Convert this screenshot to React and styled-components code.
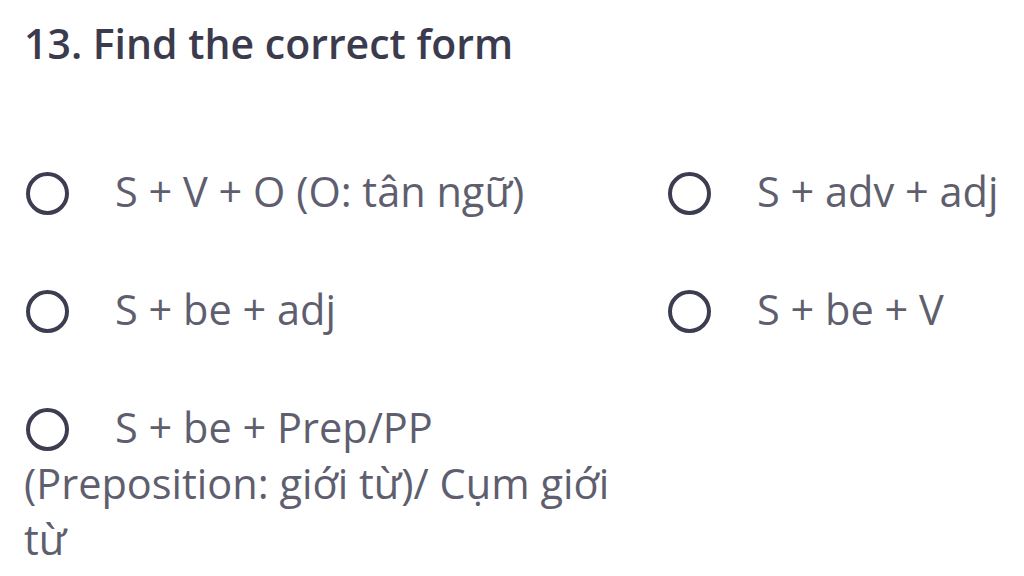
import React from 'react';
import styled, { createGlobalStyle } from 'styled-components';

const GlobalStyle = createGlobalStyle`
  html, body {
    margin: 0;
    padding: 0;
    background: #ffffff;
  }
  body {
    font-family: 'Open Sans', 'Noto Sans', sans-serif;
  }
`;

const Page = styled.div`
  width: 1024px;
  height: 576px;
  overflow: hidden;
  padding: 13px 0 0 24px;
  box-sizing: border-box;
`;

const Title = styled.h2`
  margin: 0;
  font-size: 41px;
  font-weight: 600;
  line-height: 60px;
  color: #3b3b4d;
`;

const Options = styled.div`
  display: grid;
  grid-template-columns: 620px 1fr;
  column-gap: 22px;
  row-gap: 62px;
  margin-top: 90px;
`;

const Option = styled.label`
  display: block;
  font-size: 41.5px;
  line-height: 56px;
  color: #5e5e6e;
`;

const Radio = styled.span`
  display: inline-block;
  width: 35px;
  height: 35px;
  border: 4px solid #3d3d52;
  border-radius: 50%;
  vertical-align: -8px;
  margin: 0 46px 0 2px;
`;

const options = [
  'S + V + O (O: tân ngữ)',
  'S + adv + adj',
  'S + be + adj',
  'S + be + V',
  'S + be + Prep/PP (Preposition: giới từ)/ Cụm giới từ',
];

const App = () => {
  return (
    <>
      <GlobalStyle />
      <Page>
        <Title>13. Find the correct form</Title>
        <Options>
          {options.map((text) => (
            <Option key={text}>
              <Radio />
              {text}
            </Option>
          ))}
        </Options>
      </Page>
    </>
  );
};

export default App;
